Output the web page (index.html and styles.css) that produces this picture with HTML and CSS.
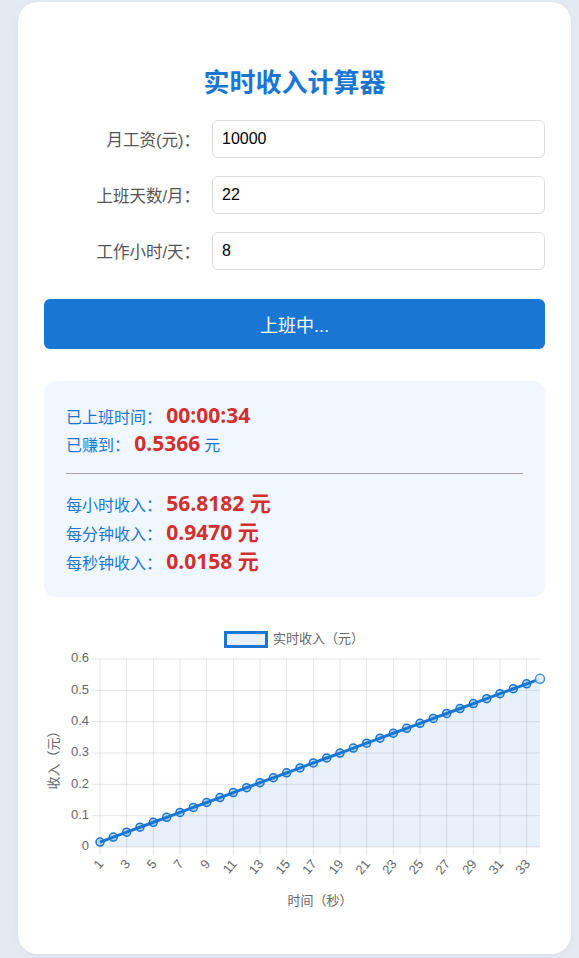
FILE: index.html
```html
<!DOCTYPE html>
<html lang="zh-CN">
<head>
    <meta charset="UTF-8">
    <meta name="viewport" content="width=device-width, initial-scale=1.0">
    <title>实时收入计算器</title>
    <link rel="stylesheet" href="styles.css">
</head>
<body>
    <div class="container">
        <h1>实时收入计算器</h1>
        <div class="form-row">
            <label for="salary">月工资(元)：</label>
            <input type="text" id="salary" value="10000">
        </div>
        <div class="form-row">
            <label for="days">上班天数/月：</label>
            <input type="text" id="days" value="22">
        </div>
        <div class="form-row">
            <label for="hours">工作小时/天：</label>
            <input type="text" id="hours" value="8">
        </div>
        <button class="start-button" id="startButton">上班中...</button>

        <div class="result">
            <div class="result-group">
                <p>已上班时间： <span class="value" id="elapsed">00:00:00</span></p>
                <p>已赚到： <span class="value" id="earned">0.0000</span> 元</p>
            </div>
            <hr>
            <div class="result-group rates">
                <p>每小时收入： <span class="value" id="perHour"></span></p>
                <p>每分钟收入： <span class="value" id="perMinute"></span></p>
                <p>每秒钟收入： <span class="value" id="perSecond"></span></p>
            </div>
        </div>

        <div class="chart-container">
            <svg id="chart" width="501" height="320" viewBox="0 0 501 320"></svg>
        </div>
    </div>

    <script>
        const SVG_NS = 'http://www.w3.org/2000/svg';
        const BLUE = '#1976d2';

        // Plot area inside the svg
        const plot = { left: 56, right: 496, top: 51, bottom: 239, maxY: 0.6 };

        // Seconds already worked when the page is drawn
        const elapsedSeconds = 34;

        function el(tag, attrs, text) {
            const node = document.createElementNS(SVG_NS, tag);
            for (const key in attrs) node.setAttribute(key, attrs[key]);
            if (text !== undefined) node.textContent = text;
            return node;
        }

        function pad(n) {
            return String(n).padStart(2, '0');
        }

        // Read the form and work out the pay per second
        function getRates() {
            const salary = parseFloat(document.getElementById('salary').value) || 0;
            const days = parseFloat(document.getElementById('days').value) || 1;
            const hours = parseFloat(document.getElementById('hours').value) || 1;
            const perHour = salary / days / hours;
            return { perHour: perHour, perMinute: perHour / 60, perSecond: perHour / 3600 };
        }

        function updateResult(rates) {
            const h = Math.floor(elapsedSeconds / 3600);
            const m = Math.floor(elapsedSeconds / 60) % 60;
            const s = elapsedSeconds % 60;
            document.getElementById('elapsed').textContent = `${pad(h)}:${pad(m)}:${pad(s)}`;
            document.getElementById('earned').textContent = (rates.perSecond * elapsedSeconds).toFixed(4);
            document.getElementById('perHour').textContent = rates.perHour.toFixed(4) + ' 元';
            document.getElementById('perMinute').textContent = rates.perMinute.toFixed(4) + ' 元';
            document.getElementById('perSecond').textContent = rates.perSecond.toFixed(4) + ' 元';
        }

        // Draw the income line chart, one point per second
        function drawChart(rates) {
            const svg = document.getElementById('chart');
            svg.innerHTML = '';

            const count = elapsedSeconds;
            const step = (plot.right - plot.left) / (count - 1);
            const xAt = i => plot.left + i * step;
            const yAt = v => plot.bottom - v / plot.maxY * (plot.bottom - plot.top);

            // Legend
            svg.appendChild(el('rect', { x: 181.5, y: 24.5, width: 41, height: 14, fill: 'rgba(25,118,210,0.1)', stroke: BLUE, 'stroke-width': 3 }));
            svg.appendChild(el('text', { x: 229, y: 32, class: 'chart-text', 'dominant-baseline': 'middle' }, '实时收入（元）'));

            // Horizontal grid and y ticks
            for (let i = 0; i <= 6; i++) {
                const y = yAt(i / 10);
                svg.appendChild(el('line', { x1: plot.left - 8, x2: plot.right, y1: y, y2: y, class: 'grid' }));
                svg.appendChild(el('text', { x: 45, y: y, class: 'chart-text', 'text-anchor': 'end', 'dominant-baseline': 'middle' }, i === 0 ? '0' : (i / 10).toFixed(1)));
            }

            // Vertical grid and rotated x ticks, every second label
            for (let i = 0; i < count; i += 2) {
                const x = xAt(i);
                svg.appendChild(el('line', { x1: x, x2: x, y1: plot.top, y2: plot.bottom + 8, class: 'grid' }));
                const tx = x + 1.5;
                const ty = 254;
                svg.appendChild(el('text', { x: tx, y: ty, class: 'chart-text', 'text-anchor': 'end', 'dominant-baseline': 'middle', transform: `rotate(-50 ${tx} ${ty})` }, String(i + 1)));
            }

            // Axis titles
            svg.appendChild(el('text', { x: 276, y: 294, class: 'chart-text', 'text-anchor': 'middle', 'dominant-baseline': 'middle' }, '时间（秒）'));
            svg.appendChild(el('text', { x: 11, y: 149, class: 'chart-text', 'text-anchor': 'middle', 'dominant-baseline': 'middle', transform: 'rotate(-90 11 149)' }, '收入（元）'));

            const points = [];
            for (let i = 0; i < count; i++) {
                points.push([xAt(i), yAt(rates.perSecond * (i + 1))]);
            }
            const line = points.map(p => p[0].toFixed(2) + ',' + p[1].toFixed(2)).join(' ');

            // Area under the line
            svg.appendChild(el('polygon', {
                points: `${line} ${plot.right},${plot.bottom} ${plot.left},${plot.bottom}`,
                fill: 'rgba(25,118,210,0.1)'
            }));
            svg.appendChild(el('polyline', { points: line, fill: 'none', stroke: BLUE, 'stroke-width': 3, 'stroke-linejoin': 'round' }));

            points.forEach((p, i) => {
                const last = i === points.length - 1;
                svg.appendChild(el('circle', {
                    cx: p[0], cy: p[1], r: last ? 4.5 : 4,
                    fill: last ? 'rgba(230,240,252,0.9)' : 'rgba(25,118,210,0.3)',
                    stroke: last ? '#3d8fe0' : BLUE, 'stroke-width': 1.5
                }));
            });
        }

        function update() {
            const rates = getRates();
            updateResult(rates);
            drawChart(rates);
        }

        ['salary', 'days', 'hours'].forEach(id => {
            document.getElementById(id).addEventListener('input', update);
        });

        update();
    </script>
</body>
</html>
```

FILE: styles.css
```css
:root {
    --page-bg: #e4eaf2;
    --card-bg: #ffffff;
    --primary: #1976d2;
    --danger: #d32f2f;
    --label: #555555;
    --border: #dddddd;
    --result-bg: #f0f7ff;
}

body {
    margin: 0;
    padding: 2px 8px 4px 18px;
    background-color: var(--page-bg);
    font-family: "Open Sans", "Noto Sans CJK SC", sans-serif;
}

.container {
    background-color: var(--card-bg);
    border-radius: 20px;
    padding: 26px;
    box-shadow: 0 2px 10px rgba(0, 0, 0, 0.04);
}

h1 {
    margin: 36px 0 22px;
    text-align: center;
    color: var(--primary);
    font-size: 26px;
    line-height: 34px;
    font-weight: 700;
    font-family: "Noto Sans CJK SC", sans-serif;
}

.form-row {
    display: flex;
    align-items: center;
    margin-bottom: 18px;
}

.form-row label {
    width: 156px;
    margin-right: 12px;
    text-align: right;
    color: var(--label);
    font-size: 16.5px;
    font-family: "Liberation Sans", "Noto Sans CJK SC", sans-serif;
}

.form-row input {
    flex-grow: 1;
    height: 38px;
    box-sizing: border-box;
    padding: 0 9px;
    border: 1px solid var(--border);
    border-radius: 6px;
    font-size: 16px;
    font-family: "Liberation Sans", Arial, sans-serif;
    color: #000;
}

.start-button {
    display: block;
    width: 100%;
    height: 50px;
    margin-top: 29px;
    border: none;
    border-radius: 6px;
    background-color: var(--primary);
    color: #fff;
    font-size: 18px;
    font-family: "Liberation Sans", "Noto Sans CJK SC", sans-serif;
    cursor: pointer;
}

.result {
    margin-top: 32px;
    padding: 22px 22px 19px;
    background-color: var(--result-bg);
    border-radius: 12px;
    color: var(--primary);
    font-size: 16px;
}

.result p {
    margin: 0;
    height: 28px;
    line-height: 28px;
}

.result .rates p {
    height: 29px;
    line-height: 29px;
}

.result .value {
    color: var(--danger);
    font-size: 21px;
    font-weight: 700;
    line-height: 1;
}

.result hr {
    margin: 14px 0 17px;
    border: none;
    border-top: 1px solid #a6a6a6;
}

.chart-container {
    margin-top: 11px;
}

.chart-container svg {
    display: block;
}

.chart-text {
    fill: #666;
    font-size: 13px;
    font-family: "Liberation Sans", "Noto Sans CJK SC", sans-serif;
}

.grid {
    stroke: rgba(0, 0, 0, 0.1);
    stroke-width: 1;
}
```
